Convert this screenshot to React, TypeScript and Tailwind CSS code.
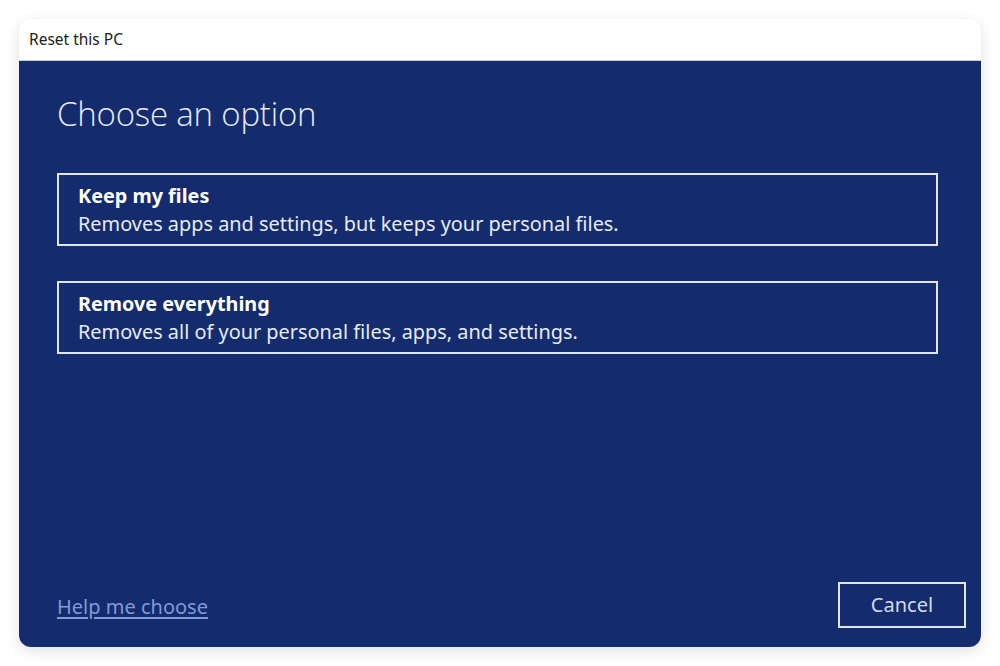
import React from 'react';

const options = [
  { title: 'Keep my files', desc: 'Removes apps and settings, but keeps your personal files.' },
  { title: 'Remove everything', desc: 'Removes all of your personal files, apps, and settings.' },
];

const App: React.FC = () => {
  return (
    <div className="flex h-[666px] w-[1000px] bg-white px-[19px] pt-[19px] pb-[19px] font-['Open_Sans',sans-serif]">
      <div className="flex flex-1 flex-col overflow-hidden rounded-[12px] bg-white shadow-[0_4px_14px_rgba(0,0,0,0.12)]">
        <div className="flex h-[42px] items-center border-b border-[#c9ccd2] pl-[10px]">
          <span className="text-[15.5px] text-[#222] font-['Noto_Sans',sans-serif]">Reset this PC</span>
        </div>
        <div className="flex flex-1 flex-col bg-[#142b6d] px-[38px] pb-[19px]">
          <h1 className="mt-[31px] text-[33px] font-light leading-[44px] text-[#e6eaf3] tracking-[-0.2px]">Choose an option</h1>
          <div className="mt-[37px] flex flex-col gap-[35px] pr-[5px]">
            {options.map((o) => (
              <button
                key={o.title}
                type="button"
                className="flex h-[73px] flex-col justify-center border-2 border-[#dfe5ef] px-[19px] pt-[1px] text-left font-['Noto_Sans',sans-serif]"
              >
                <span className="text-[19.8px] font-bold leading-[27px] text-white">{o.title}</span>
                <span className="text-[19.9px] leading-[29px] text-[#e6eaf3]">{o.desc}</span>
              </button>
            ))}
          </div>
          <div className="mt-auto flex items-end justify-between">
            <a className="mb-[6px] text-[20px] text-[#7f9bd8] underline underline-offset-[3px] font-['Noto_Sans',sans-serif]" href="#">
              Help me choose
            </a>
            <button
              type="button"
              className="mr-[-23px] h-[46px] w-[128px] border-2 border-[#dfe5ef] text-[20px] text-[#d3dbea] font-['Noto_Sans',sans-serif]"
            >
              Cancel
            </button>
          </div>
        </div>
      </div>
    </div>
  );
};

export default App;
